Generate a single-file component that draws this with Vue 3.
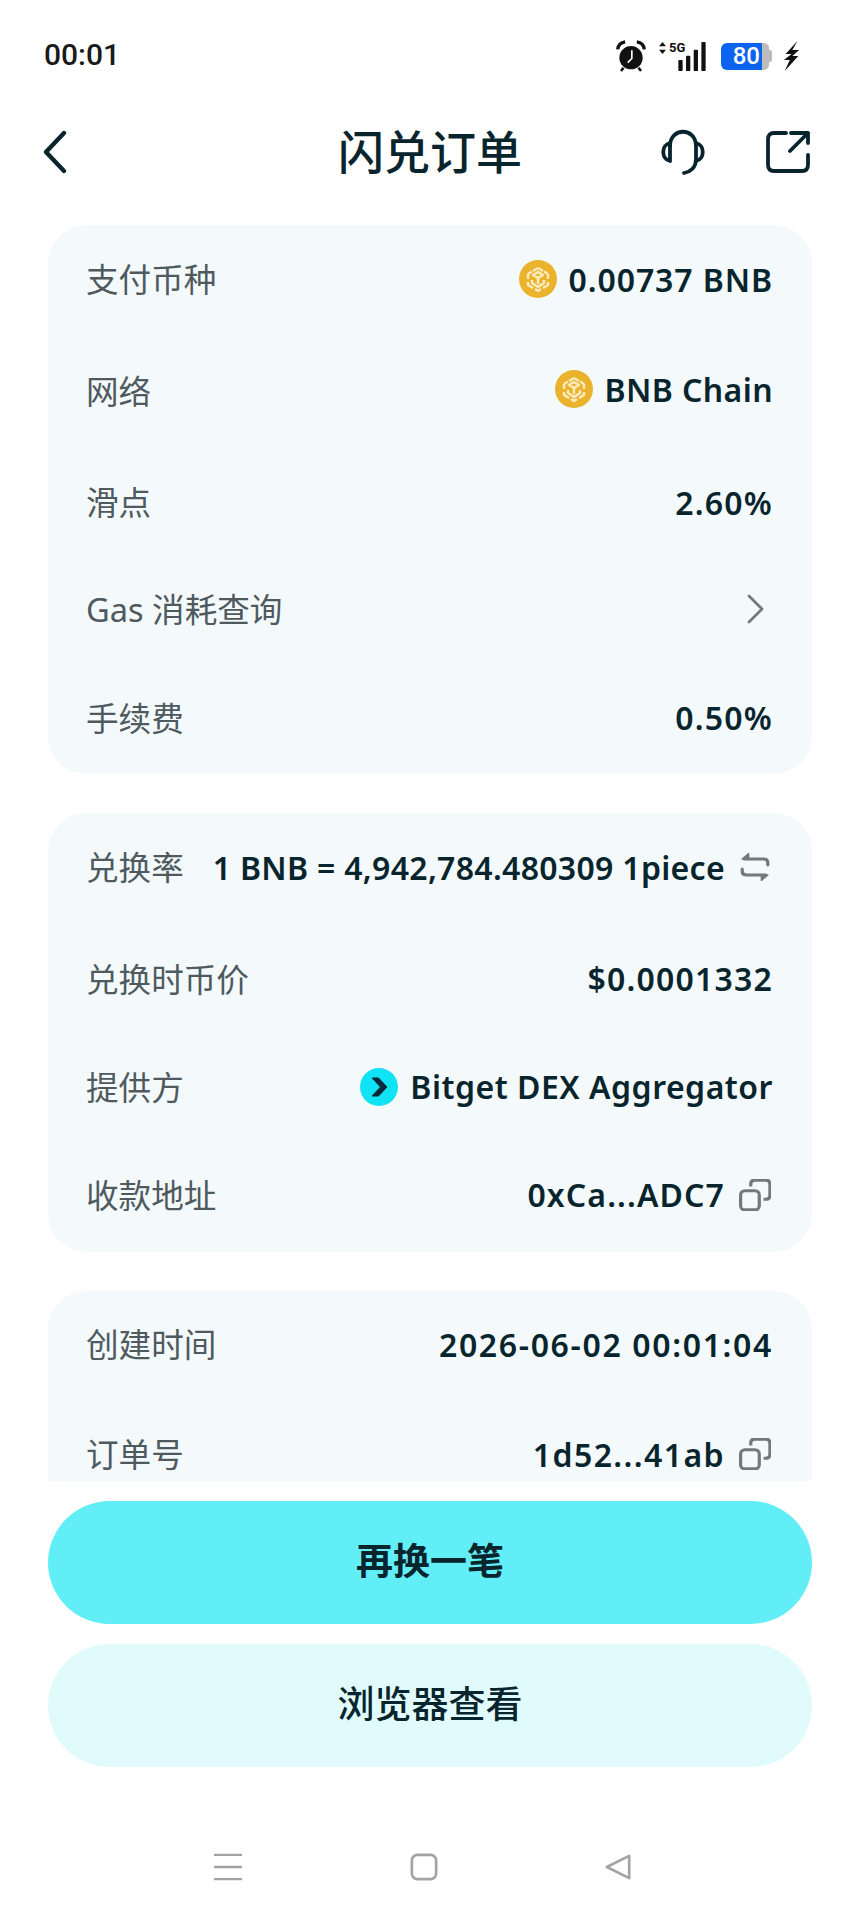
<template>
  <div class="screen">
    <div class="status">
      <span class="time">00:01</span>
      <div class="status__icons">
        <svg class="ic-alarm" viewBox="0 0 36 38" width="30" height="32">
          <circle cx="18" cy="21" r="14" fill="#111" />
          <path d="M2 11 Q3 3 11 2 M34 11 Q33 3 25 2" stroke="#111" stroke-width="4" fill="none" />
          <path d="M9 33 L6 37 M27 33 L30 37" stroke="#111" stroke-width="3" />
          <path d="M19 12 V22 L14 27" stroke="#fff" stroke-width="2" fill="none" />
        </svg>
        <div class="signal">
          <svg class="signal__arrows" viewBox="0 0 8 14" width="7" height="12">
            <path d="M4 0 L8 5 H0Z M4 14 L0 9 H8Z" fill="#111" />
          </svg>
          <span class="signal__5g">5G</span>
          <svg class="signal__bars" viewBox="0 0 32 34" width="30" height="29">
            <rect x="0" y="21" width="5" height="13" rx="1" fill="#111" />
            <rect x="9" y="16" width="5" height="18" rx="1" fill="#111" />
            <rect x="18" y="9" width="5" height="25" rx="1" fill="#111" />
            <rect x="27" y="0" width="5" height="34" rx="1" fill="#111" />
          </svg>
        </div>
        <div class="battery">
          <div class="battery__fill">80</div>
          <div class="battery__rest"></div>
          <div class="battery__cap"></div>
        </div>
        <svg class="ic-bolt" viewBox="0 0 20 30" width="17" height="30" preserveAspectRatio="none">
          <path d="M17 0 L3 13 H10 L1 19 H8 L2 30 L18 15 H11 L19 9 H11Z" fill="#111" />
        </svg>
      </div>
    </div>

    <div class="nav">
      <svg viewBox="0 0 26 44" width="26" height="44" class="nav__back">
        <path d="M22 3 L4 22 L22 41" stroke="#08252e" stroke-width="4.4" fill="none" stroke-linecap="round" stroke-linejoin="round" />
      </svg>
      <span class="nav__title">闪兑订单</span>
      <svg viewBox="0 0 46 46" width="46" height="46" class="nav__headset">
        <path d="M10 17 C10 -2 36 -2 36 17 V30 C36 39 30 43 24 44" stroke="#08252e" stroke-width="3.8" fill="none" stroke-linecap="round" />
        <path d="M10 14 C1 16 1 30 10 32 Z M36 14 C45 16 45 30 36 32" stroke="#08252e" stroke-width="3.8" fill="none" stroke-linejoin="round" />
      </svg>
      <svg viewBox="0 0 44 42" width="44" height="42" class="nav__share">
        <path d="M20 2 H8 Q2 2 2 8 V34 Q2 40 8 40 H36 Q42 40 42 34 V24" stroke="#08252e" stroke-width="3.8" fill="none" stroke-linecap="round" />
        <path d="M25 2 H42 V12 M42 2 L24 20" stroke="#08252e" stroke-width="3.8" fill="none" stroke-linecap="round" stroke-linejoin="round" />
      </svg>
    </div>

    <div class="scroll">
      <section v-for="(card, i) in cards" :key="i" class="card">
        <div v-for="row in card" :key="row.label" class="row" :style="{ height: row.h + 'px' }">
          <span class="row__label">{{ row.label }}</span>
          <div class="row__value" :class="{ 'row__value--up': row.up }">
            <svg v-if="row.icon === 'bnb'" class="coin" viewBox="0 0 38 38" width="38" height="38">
              <circle cx="19" cy="19" r="19" fill="#ebb22c" />
              <g fill="none" stroke="#fcecc0" stroke-width="2.4" stroke-linejoin="round">
                <path d="M19 8 L24 11 M19 8 L14 11" />
                <path d="M9 14 L13 11.5 M29 14 L25 11.5 M9 14 V19 M29 14 V19" />
                <path d="M14 15 L19 18 L24 15 L19 12Z" />
                <path d="M19 18 V24" />
                <path d="M9 22 V25 L14 28 M29 22 V25 L24 28" />
                <path d="M13 20 V23 L19 27 L25 23 V20" />
                <path d="M16 29 L19 31 L22 29" />
              </g>
            </svg>
            <svg v-if="row.icon === 'bitget'" class="coin" viewBox="0 0 38 38" width="38" height="38">
              <circle cx="19" cy="19" r="19" fill="#0fe3f4" />
              <path d="M12 10 H18.5 L27 19 L18.5 28 H12 L20.5 19Z" fill="#08293a" stroke="#08293a" stroke-width="1" stroke-linejoin="round" />
            </svg>
            <span class="row__text" :style="{ letterSpacing: (row.ls || 0) + 'px' }">{{ row.value }}</span>
            <svg v-if="row.icon === 'swap'" class="tail" viewBox="0 0 30 30" width="32" height="32">
              <path d="M9 2.5 L3 7.5 H9Z M21 27.5 L27 22.5 H21Z" fill="#70797c" stroke="#70797c" stroke-width="1.4" stroke-linejoin="round" />
              <path d="M5 7.5 H23 Q27 7.5 27 11 V13 M25 22.5 H7 Q3 22.5 3 19 V17" stroke="#70797c" stroke-width="3" fill="none" stroke-linecap="round" stroke-linejoin="round" />
            </svg>
            <svg v-if="row.icon === 'copy'" class="tail" viewBox="1 1 30 30" width="32" height="32">
              <rect x="2.5" y="12" width="17.5" height="18" rx="4" stroke="#70797c" stroke-width="3" fill="none" />
              <path d="M12 8 V6 Q12 2 16 2 H26 Q30 2 30 6 V16 Q30 20 26 20 H24" stroke="#70797c" stroke-width="3" fill="none" />
            </svg>
            <svg v-if="row.icon === 'more'" class="more" viewBox="0 0 22 32" width="22" height="32">
              <path d="M4 3 L17 16 L4 29" stroke="#70797c" stroke-width="2.8" fill="none" stroke-linecap="round" stroke-linejoin="round" />
            </svg>
          </div>
        </div>
      </section>
    </div>

    <div class="actions">
      <button class="btn btn--primary">再换一笔</button>
      <button class="btn btn--light">浏览器查看</button>
    </div>

    <div class="sysnav">
      <svg viewBox="0 0 30 30" width="30" height="28">
        <path d="M0 2 H30 M0 15 H30 M0 28 H30" stroke="#a3a3a3" stroke-width="2.6" />
      </svg>
      <svg viewBox="0 0 30 30" width="28" height="28">
        <rect x="2" y="2" width="26" height="26" rx="6" stroke="#a3a3a3" stroke-width="2.8" fill="none" />
      </svg>
      <svg viewBox="0 0 30 30" width="28" height="28">
        <path d="M27 3 V27 L3 15Z" stroke="#a3a3a3" stroke-width="2.8" fill="none" stroke-linejoin="round" />
      </svg>
    </div>
  </div>
</template>

<script setup>
const cards = [
  [
    { label: '支付币种', value: '0.00737 BNB', icon: 'bnb', h: 110, ls: 0.9 },
    { label: '网络', value: 'BNB Chain', icon: 'bnb', h: 114, ls: 0.4, up: true },
    { label: '滑点', value: '2.60%', h: 108, ls: 1.2 },
    { label: 'Gas 消耗查询', value: '', icon: 'more', h: 106 },
    { label: '手续费', value: '0.50%', h: 111, ls: 1.2 }
  ],
  [
    { label: '兑换率', value: '1 BNB = 4,942,784.480309 1piece', icon: 'swap', h: 110, ls: 0.3 },
    { label: '兑换时币价', value: '$0.0001332', h: 113, ls: 1.2 },
    { label: '提供方', value: 'Bitget DEX Aggregator', icon: 'bitget', h: 103, ls: 0.5 },
    { label: '收款地址', value: '0xCa...ADC7', icon: 'copy', h: 113, ls: 1.1 }
  ],
  [
    { label: '创建时间', value: '2026-06-02 00:01:04', h: 108, ls: 1.65 },
    { label: '订单号', value: '1d52...41ab', icon: 'copy', h: 112, ls: 1.4 }
  ]
]
</script>

<style>
html,
body {
  margin: 0;
  background: #fff;
}
</style>

<style scoped>
.screen {
  width: 860px;
  height: 1920px;
  display: flex;
  flex-direction: column;
  background: #fff;
  overflow: hidden;
  font-family: "Noto Sans", "Noto Sans CJK SC", sans-serif;
  color: #08252e;
}

.status {
  height: 110px;
  flex: none;
  box-sizing: border-box;
  padding: 36px 60px 0 44px;
  display: flex;
  justify-content: space-between;
  align-items: flex-start;
}

.time {
  font-family: Roboto, sans-serif;
  font-size: 30px;
  font-weight: 500;
  line-height: 38px;
  color: #1a1a1a;
}

.status__icons {
  display: flex;
  align-items: center;
  height: 40px;
}

.signal {
  position: relative;
  width: 48px;
  height: 29px;
  margin-left: 13px;
}

.signal__arrows {
  position: absolute;
  left: 0;
  top: 0;
}

.signal__5g {
  position: absolute;
  left: 10px;
  top: -2px;
  font-family: Roboto, sans-serif;
  font-size: 13px;
  font-weight: 700;
  line-height: 16px;
  color: #111;
}

.signal__bars {
  position: absolute;
  right: 0;
  top: 0;
}

.battery {
  display: flex;
  align-items: center;
  height: 27px;
  margin-left: 14px;
}

.battery__fill {
  width: 41px;
  height: 27px;
  border-radius: 6px 0 0 6px;
  background: #0b63f0;
  color: #fff;
  font-family: Roboto, sans-serif;
  font-size: 24px;
  font-weight: 500;
  line-height: 27px;
  text-align: right;
  padding-right: 2px;
  box-sizing: border-box;
}

.battery__rest {
  width: 7px;
  height: 27px;
  background: #bcbcbc;
  border-radius: 0 5px 5px 0;
}

.battery__cap {
  width: 3px;
  height: 12px;
  background: #bcbcbc;
  border-radius: 0 2px 2px 0;
}

.ic-bolt {
  margin-left: 11px;
}

.nav {
  height: 115px;
  flex: none;
  box-sizing: border-box;
  padding: 0 50px 32px 42px;
  display: flex;
  align-items: center;
  position: relative;
}

.nav__title {
  position: absolute;
  left: 0;
  right: 0;
  top: 11px;
  text-align: center;
  font-size: 46px;
  font-weight: 500;
  line-height: 60px;
  pointer-events: none;
}

.nav__headset {
  margin-left: auto;
  margin-right: 60px;
}

.scroll {
  height: 1256px;
  flex: none;
  overflow: hidden;
  padding: 0 48px;
  display: flex;
  flex-direction: column;
  gap: 39px;
}

.card {
  flex: none;
  background: #f4f9fb;
  border-radius: 38px;
  padding: 0 41px 0 38px;
}

.row {
  display: flex;
  justify-content: space-between;
  align-items: center;
  box-sizing: border-box;
  padding-bottom: 2px;
}

.row__label {
  font-size: 32.6px;
  color: #4e5a5e;
  white-space: nowrap;
  margin-bottom: 2px;
}

.row__value {
  display: flex;
  align-items: center;
  font-size: 32px;
  font-weight: 600;
  white-space: nowrap;
}

.row__value--up {
  margin-bottom: 4px;
}

.row__text {
  margin-right: -2px;
}

.coin {
  margin-right: 12px;
}

.tail {
  margin-left: 16px;
}

.more {
  margin-right: 4px;
}

.actions {
  flex: none;
  padding: 20px 48px 0;
  display: flex;
  flex-direction: column;
  gap: 20px;
}

.btn {
  height: 123px;
  border: none;
  border-radius: 62px;
  padding: 0 0 7px;
  font-family: inherit;
  font-size: 37px;
  color: #08252e;
}

.btn--primary {
  background: #62eef7;
  font-weight: 600;
}

.btn--light {
  background: #e1fbfd;
  font-weight: 500;
}

.sysnav {
  margin-top: 86px;
  padding: 0 228px 0 213px;
  display: flex;
  justify-content: space-between;
}
</style>
